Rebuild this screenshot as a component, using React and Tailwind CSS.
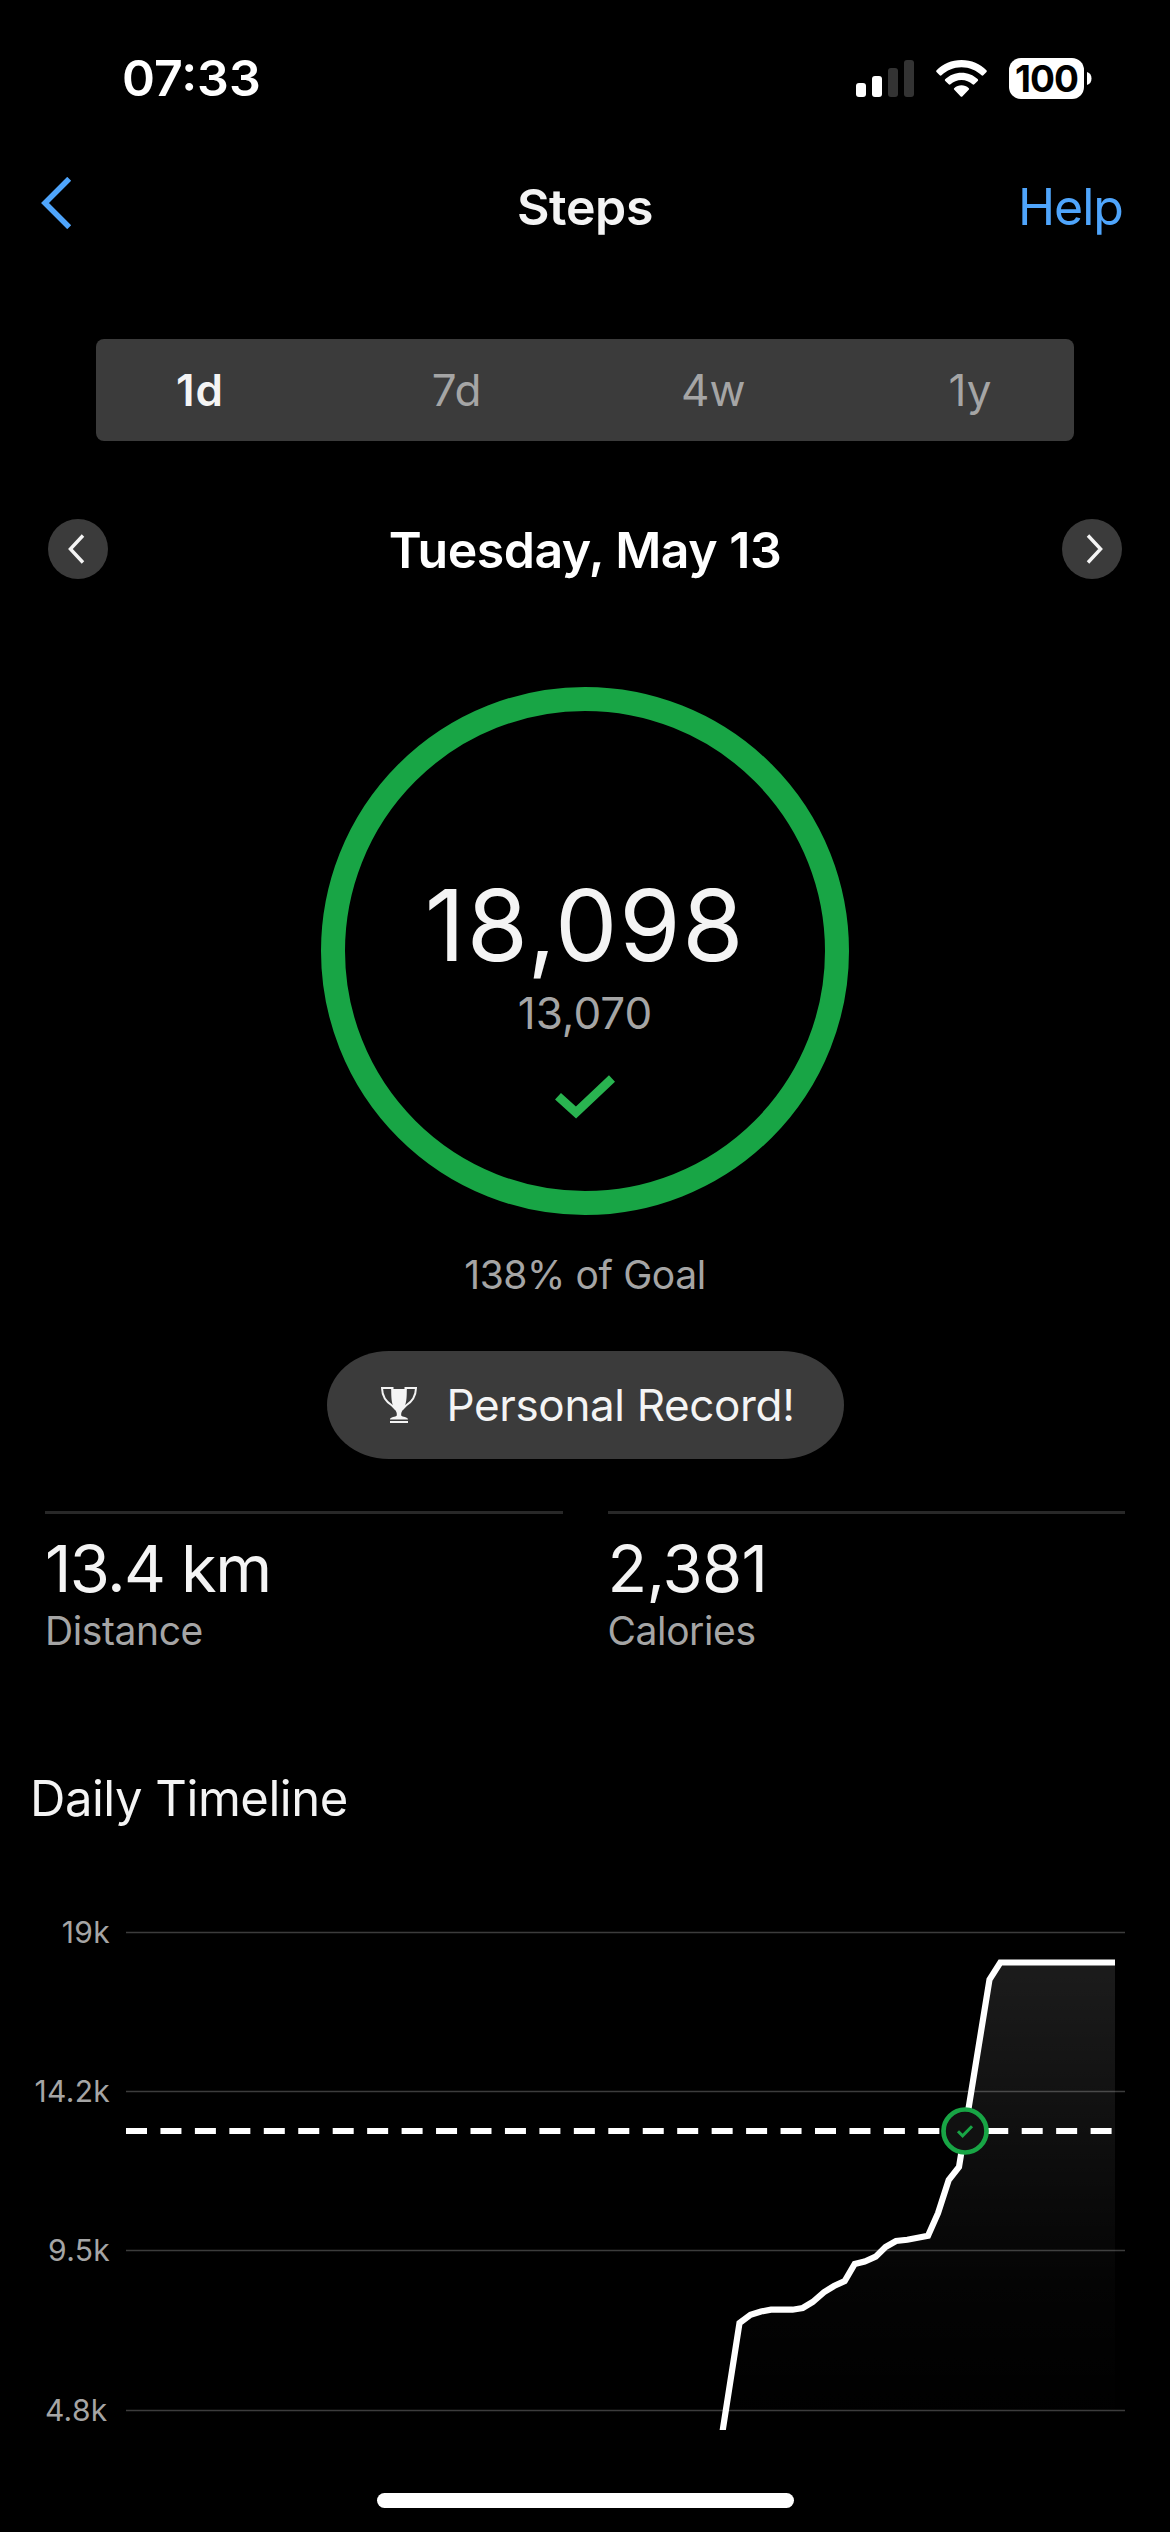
const ranges = ['1d', '7d', '4w', '1y'];

const stats = [
  { value: '13.4 km', label: 'Distance', valueClass: 'tracking-[-1.6px]' },
  { value: '2,381', label: 'Calories', valueClass: 'tracking-[-0.75px]' },
];

// y is the grid line, x the right edge of its label
const gridLines = [
  { y: 52.5, label: '19k', x: 110 },
  { y: 211.5, label: '14.2k', x: 110 },
  { y: 370.5, label: '9.5k', x: 110 },
  { y: 530.5, label: '4.8k', x: 107.5 },
];

const points = [
  [721.8, 556], [739.5, 443], [750.5, 434.8], [761, 431.5], [771, 429.7],
  [792.5, 429.7], [802.7, 428], [812.7, 422], [824, 412.2], [834, 406],
  [844.7, 401], [854.7, 384], [864.7, 381.5], [875.7, 376.7], [885.5, 367],
  [896, 361], [907.3, 359.8], [917.7, 357.8], [928, 355.7], [938, 333.2],
  [948.7, 300], [959, 287], [989.5, 99.6], [1000.3, 82.5], [1115, 82.5],
];
const linePoints = points.map((p) => p.join(',')).join(' ');

function StatusBar() {
  return (
    <div className="flex h-[156px] items-center justify-between pr-[78px] pl-[122px]">
      <span className="text-[50px] font-semibold text-white">07:33</span>
      <div className="flex items-center">
        <svg width="58" height="37" viewBox="0 0 58 37">
          <rect x="0" y="23" width="10" height="14" rx="3" fill="#fff" />
          <rect x="16" y="16" width="10" height="21" rx="3" fill="#fff" />
          <rect x="32" y="8" width="10" height="29" rx="3" fill="#333" />
          <rect x="48" y="0" width="10" height="37" rx="3" fill="#333" />
        </svg>
        <svg className="ml-[22px]" width="51" height="37" viewBox="0 0 51 37" fill="#fff">
          <path d="M25.5 0C35.5 0 44.3 3.9 50.4 10.2c.6.6.6 1.2.1 1.8l-3.2 3.3c-.5.5-1.2.5-1.8 0C40.3 10.2 33.3 7.2 25.5 7.2S10.7 10.2 5.5 15.3c-.6.5-1.3.5-1.8 0L.5 12c-.5-.6-.5-1.2.1-1.8C6.7 3.9 15.5 0 25.5 0Z" />
          <path d="M25.5 12.7c6.2 0 11.9 2.4 16.1 6.3.7.6.7 1.3.1 1.9l-3.4 3.4c-.5.5-1.2.5-1.8 0-2.9-2.7-6.7-4.4-11-4.4s-8.1 1.7-11 4.4c-.6.5-1.3.5-1.8 0L9.3 20.9c-.6-.6-.6-1.3.1-1.9 4.2-3.9 9.9-6.3 16.1-6.3Z" />
          <path d="M25.5 25.3c2.7 0 5.2 1 7.1 2.6.7.6.7 1.2.1 1.8l-6.4 6.7c-.5.5-1.1.5-1.6 0l-6.4-6.7c-.6-.6-.6-1.2.1-1.8 1.9-1.6 4.4-2.6 7.1-2.6Z" />
        </svg>
        <div className="ml-[22px] flex h-[41px] w-[75px] items-center justify-center rounded-[12px] bg-white text-[37px] leading-none font-bold tracking-[-1px] text-black">
          100
        </div>
        <svg className="ml-[3px]" width="5" height="13" viewBox="0 0 5 13">
          <path d="M0 0C3 .8 4.5 3.3 4.5 6.5S3 12.2 0 13Z" fill="#fff" />
        </svg>
      </div>
    </div>
  );
}

function NavBar() {
  return (
    <div className="grid h-[102px] grid-cols-3 items-center px-[45px] text-[50px]">
      <svg className="-ml-1 mb-2" width="32" height="52" viewBox="0 0 32 52">
        <path d="M28.2 1.8L4 26l24.2 24.2" fill="none" stroke="#4fa5fc" strokeWidth="5.6" />
      </svg>
      <h1 className="text-center font-semibold tracking-[-0.36px] text-[#f4f4f4]">Steps</h1>
      <span className="pr-[2px] text-right tracking-[-1px] text-[#4fa5fc]">Help</span>
    </div>
  );
}

function RangeTabs() {
  return (
    <div className="mx-24 mt-[81px] flex h-[102px] items-center justify-between rounded-lg bg-[#3b3b3b] text-[44px] text-[#a5a5a5]">
      {ranges.map((range, i) => (
        <span
          key={range}
          className={i === 0 ? 'w-[208px] text-center font-semibold tracking-[1px] text-[#f4f4f4]' : 'w-[208px] text-center'}
        >
          {range}
        </span>
      ))}
    </div>
  );
}

function DateRow() {
  return (
    <div className="mx-12 mt-[78px] flex h-[60px] items-center justify-between">
      <div className="flex size-[60px] items-center justify-center rounded-full bg-[#3b3b3b]">
        <svg className="mr-1" width="17" height="30" viewBox="0 0 17 30">
          <path d="M15 1.5L2.4 15 15 28.5" fill="none" stroke="#f4f4f4" strokeWidth="3.4" />
        </svg>
      </div>
      <h2 className="pt-0.5 text-[50px] font-semibold tracking-[-0.5px] text-white">Tuesday, May 13</h2>
      <div className="flex size-[60px] items-center justify-center rounded-full bg-[#3b3b3b]">
        <svg className="ml-1" width="17" height="30" viewBox="0 0 17 30">
          <path d="M2 1.5L14.6 15 2 28.5" fill="none" stroke="#f4f4f4" strokeWidth="3.4" />
        </svg>
      </div>
    </div>
  );
}

function GoalRing() {
  return (
    <div className="mx-auto mt-[108px] flex size-[528px] flex-col items-center rounded-full border-[24px] border-[#18a545] pt-[159px]">
      <span className="text-[99px] leading-[110px] tracking-[1.65px] text-[#f4f4f4]">18,098</span>
      <span className="mt-[5px] text-[44px] leading-[56px] text-[#a5a5a5]">13,070</span>
      <svg className="mt-[34px]" width="60" height="44" viewBox="0 0 60 44">
        <path d="M3 21.2L21 37.5 57 3.5" fill="none" stroke="#29b450" strokeWidth="8.8" />
      </svg>
    </div>
  );
}

function RecordPill() {
  return (
    <div className="mx-auto mt-[46px] flex h-[108px] w-[517px] items-center rounded-[62px/54px] bg-[#3b3b3b] pl-[54px]">
      <svg width="36" height="36" viewBox="0 0 36 36">
        <path
          d="M11.5 2.5V1H1C1.2 9 4.5 14.5 11 18.5l4 4M24.5 2.5V1H35C34.8 9 31.5 14.5 25 18.5l-4 4"
          fill="none"
          stroke="#f4f4f4"
          strokeWidth="2"
        />
        <path
          d="M10.2 2H25.800C25.800 11 25.500 17 22.500 22 20.500 24.500 20 26 20.200 28.500c1 1.600 6.800 1.300 6.800 4H9c0-2.700 5.800-2.400 6.800-4 .2-2.500-.3-4-2.300-6.500C10.500 17 10.200 11 10.200 2Z"
          fill="#f4f4f4"
        />
        <rect x="9" y="34" width="18" height="2" fill="#f4f4f4" />
      </svg>
      <span className="ml-[30px] text-[44px] tracking-[-0.36px] text-[#f4f4f4]">Personal Record!</span>
    </div>
  );
}

function Stats() {
  return (
    <div className="mx-[45px] mt-[52px] grid grid-cols-2 gap-[45px]">
      {stats.map((stat) => (
        <div key={stat.label} className="border-t-[3px] border-[#282828] pt-[20px]">
          <p className={`text-[65px] leading-[70px] text-[#f4f4f4] ${stat.valueClass}`}>{stat.value}</p>
          <p className="mt-[2px] text-[39px] leading-[50px] tracking-[-0.4px] text-[#a5a5a5]">{stat.label}</p>
        </div>
      ))}
    </div>
  );
}

function TimelineChart() {
  return (
    <svg className="block" width="1170" height="550" viewBox="0 0 1170 550">
      <defs>
        <linearGradient id="area" x1="0" y1="82" x2="0" y2="550" gradientUnits="userSpaceOnUse">
          <stop offset="0" stopColor="#fff" stopOpacity="0.11" />
          <stop offset="0.7" stopColor="#fff" stopOpacity="0.015" />
          <stop offset="1" stopColor="#fff" stopOpacity="0" />
        </linearGradient>
      </defs>
      {gridLines.map(({ y, label, x }) => (
        <g key={label}>
          <text x={x} y={y + 10} textAnchor="end" fontSize="30" letterSpacing="0.3" fill="#a5a5a5">
            {label}
          </text>
          <path d={`M126 ${y}H1125`} stroke="#3c3c3c" strokeWidth="1.6" />
        </g>
      ))}
      <polygon points={`${linePoints} 1115,556`} fill="url(#area)" />
      <path d="M126 251H1114" stroke="#fff" strokeWidth="6.2" strokeDasharray="21 13.45" />
      <polyline points={linePoints} fill="none" stroke="#fff" strokeWidth="6.2" />
      <circle cx="965" cy="251" r="21.5" fill="#111" stroke="#18a545" strokeWidth="4.7" />
      <path d="M958 251.2l4.6 4.6 9.4-9.6" fill="none" stroke="#18a545" strokeWidth="3" />
    </svg>
  );
}

export default function App() {
  return (
    <div className="h-[2532px] w-[1170px] overflow-hidden bg-black font-['Inter',sans-serif]">
      <StatusBar />
      <NavBar />
      <RangeTabs />
      <DateRow />
      <GoalRing />
      <p className="mt-[30px] text-center text-[39px] leading-[60px] tracking-[-0.4px] text-[#a5a5a5]">138% of Goal</p>
      <RecordPill />
      <Stats />
      <h3 className="mt-[113px] ml-[30px] text-[49px] leading-[60px] tracking-[-0.47px] text-[#f4f4f4]">Daily Timeline</h3>
      <div className="mt-[51px]">
        <TimelineChart />
      </div>
      <div className="mx-auto mt-[63px] h-[15px] w-[417px] rounded-full bg-white" />
    </div>
  );
}
